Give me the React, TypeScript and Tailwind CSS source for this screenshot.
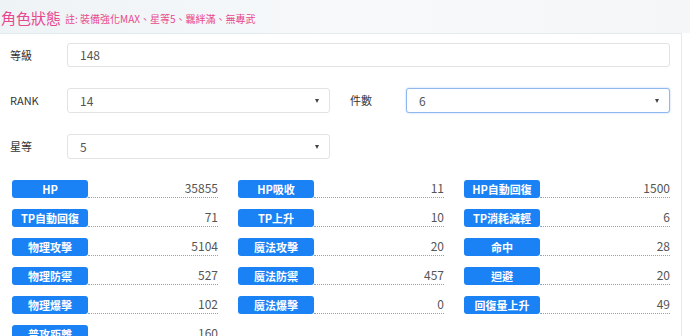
const font = { fontFamily: '"Noto Sans CJK TC", "Noto Sans", sans-serif' };

const stats: [string, string][] = [
  ["HP", "35855"], ["HP吸收", "11"], ["HP自動回復", "1500"],
  ["TP自動回復", "71"], ["TP上升", "10"], ["TP消耗減輕", "6"],
  ["物理攻擊", "5104"], ["魔法攻擊", "20"], ["命中", "28"],
  ["物理防禦", "527"], ["魔法防禦", "457"], ["迴避", "20"],
  ["物理爆擊", "102"], ["魔法爆擊", "0"], ["回復量上升", "49"],
  ["普攻距離", "160"],
];

function Select({ value, focus }: { value: string; focus?: boolean }) {
  return (
    <div className={`flex-1 h-[25px] rounded-[3px] border bg-white flex items-center pl-[12px] pr-[10px] text-[12px] text-[#555] ${focus ? "border-[#8fb8ee] shadow-[0_0_2px_#a9c9f5]" : "border-[#e3e3e3]"}`}>
      <span className="flex-1">{value}</span>
      <span className="w-0 h-0 border-l-[2.5px] border-r-[2.5px] border-t-[4px] border-l-transparent border-r-transparent border-t-[#444]" />
    </div>
  );
}

export default function App() {
  return (
    <div style={font} className="w-[690px] h-[336px] overflow-hidden bg-white">
      <div className="h-[33px] flex items-end pb-[8px] pl-[1px] gap-[4px] bg-gradient-to-r from-[#eef3f6] via-[#f7f9fa] to-[#f4f6f7] text-[#e9488f]">
        <span className="text-[15px] leading-none">角色狀態</span>
        <span className="text-[10px] leading-none pb-[1px]">註: 裝備強化MAX、星等5、羈絆滿、無專武</span>
      </div>
      <div className="w-[682px] border-t border-r border-[#e4ebef] pl-[10px] pt-[9px]">
        <div className="w-[660px] flex flex-col gap-[21px] text-[11px] text-[#333]">
          <div className="flex items-center">
            <span className="w-[57px]">等級</span>
            <div className="flex-1 h-[24px] rounded-[3px] border border-[#e3e3e3] flex items-center pl-[12px] text-[12px] text-[#555]">148</div>
          </div>
          <div className="flex items-center gap-[20px]">
            <div className="flex-1 flex items-center">
              <span className="w-[57px]">RANK</span>
              <Select value="14" />
            </div>
            <div className="flex-1 flex items-center">
              <span className="w-[56px]">件數</span>
              <Select value="6" focus />
            </div>
          </div>
          <div className="flex items-center gap-[20px]">
            <div className="flex-1 flex items-center">
              <span className="w-[57px]">星等</span>
              <Select value="5" />
            </div>
            <div className="flex-1" />
          </div>
        </div>
        <div className="w-[658px] ml-[2px] mt-[21px] grid grid-cols-3 gap-x-[20px] gap-y-[11px]">
          {stats.map(([k, v]) => (
            <div key={k} className="flex items-end h-[18px]">
              <div className="w-[76px] h-[18px] rounded-[3px] bg-[#1a82f5] text-white text-[11px] font-bold flex items-center justify-center leading-none">{k}</div>
              <div className="flex-1 h-[18px] border-b border-dotted border-[#8aa4c4] text-right text-[12px] text-[#555] leading-[16px]">{v}</div>
            </div>
          ))}
        </div>
      </div>
    </div>
  );
}
